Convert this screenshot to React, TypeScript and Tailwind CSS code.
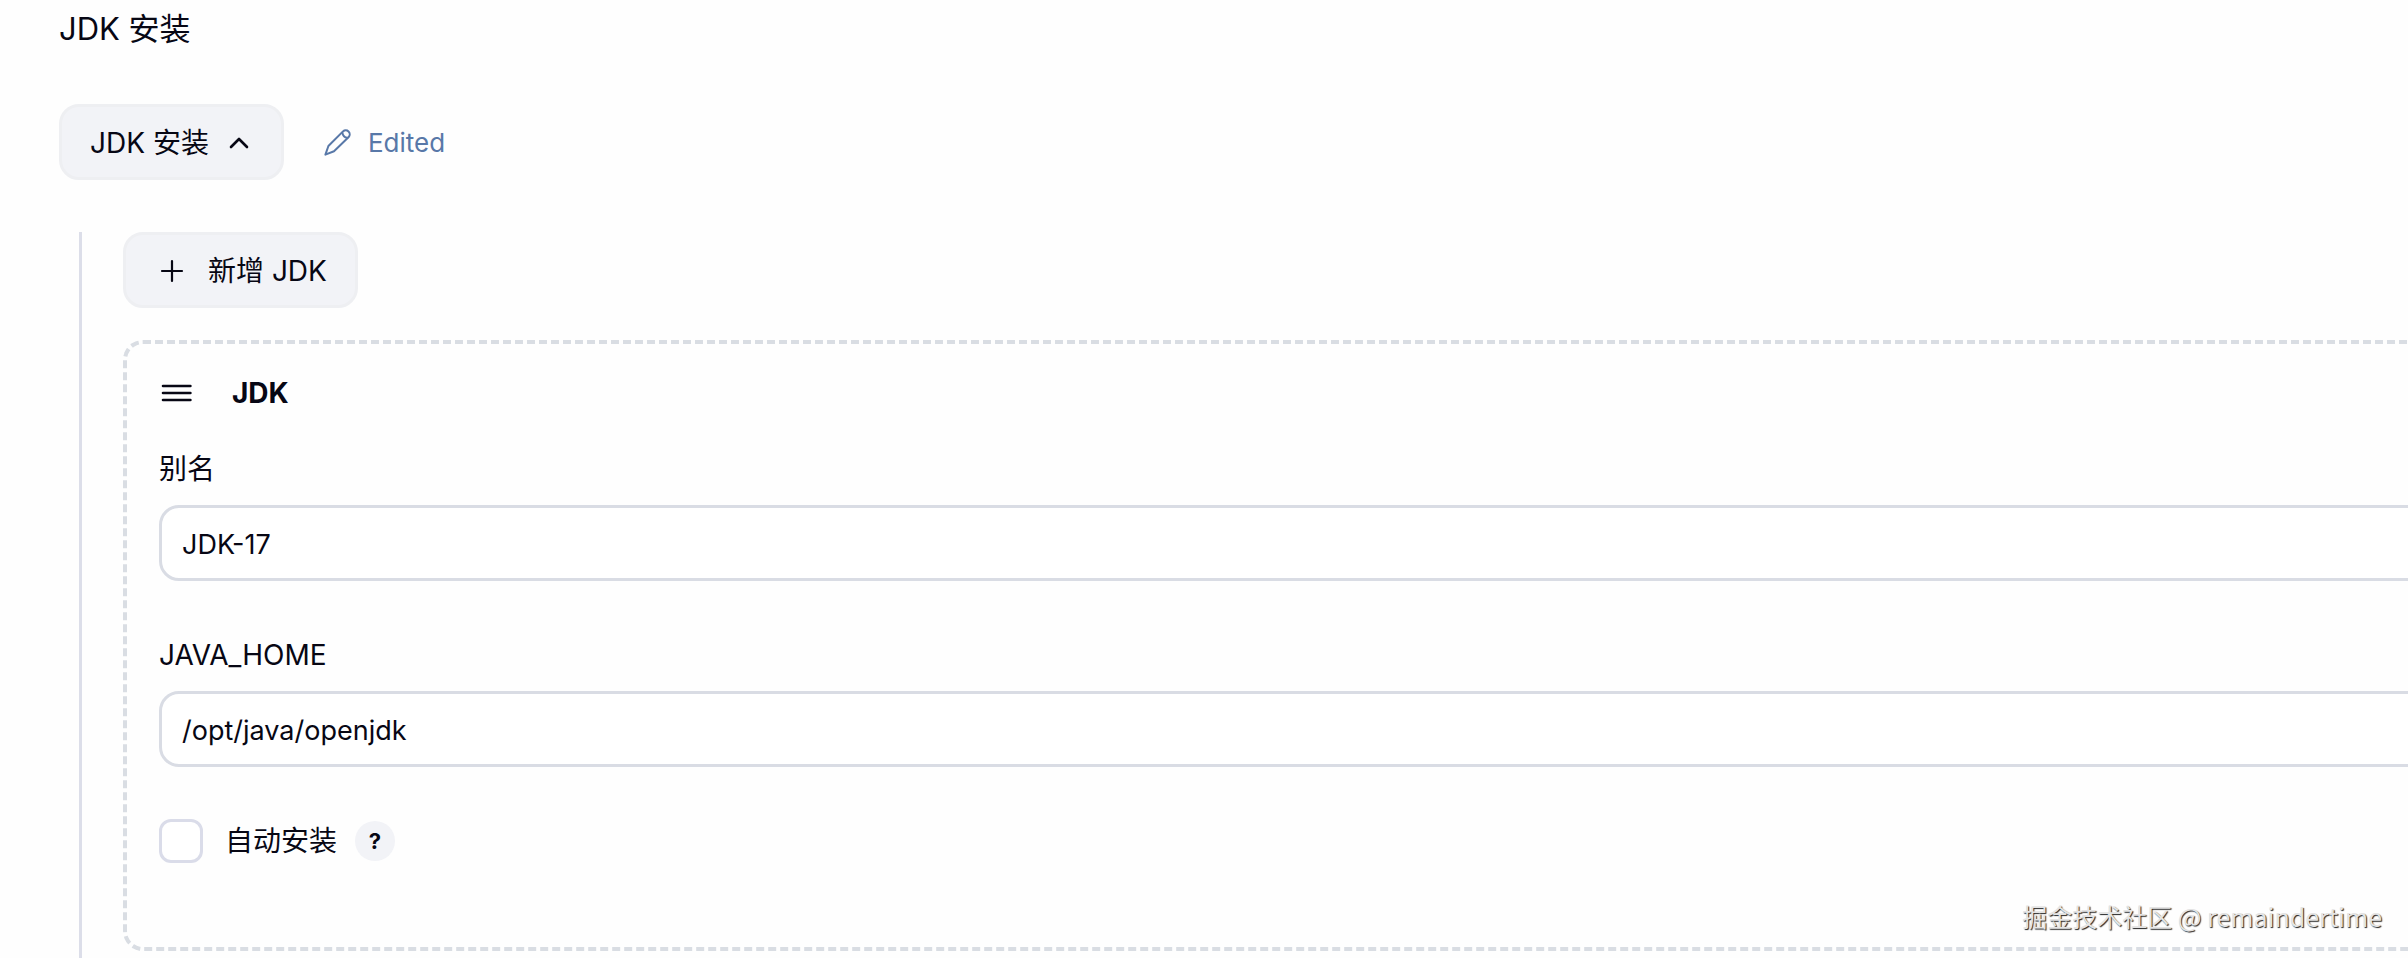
import { useState } from "react";

function ChevronUpIcon() {
  return (
    <svg className="w-5 h-3" viewBox="0 0 20 12" fill="none" stroke="currentColor" strokeWidth="2.6" strokeLinecap="round" strokeLinejoin="round" aria-hidden="true">
      <path d="M2 10l8-8 8 8" />
    </svg>
  );
}

function PencilIcon() {
  return (
    <svg className="w-7 h-7" viewBox="0 0 28 28" fill="none" stroke="currentColor" strokeWidth="2" strokeLinecap="round" strokeLinejoin="round" aria-hidden="true">
      <path d="M19 3.4a4 4 0 0 1 5.7 5.6L10 23.2 1.4 26.6 4.4 18z" />
      <path d="M18.4 4.8q.6 4.2 5 5" />
    </svg>
  );
}

function PlusIcon() {
  return (
    <svg className="w-6 h-6" viewBox="0 0 24 24" fill="none" stroke="currentColor" strokeWidth="2.2" strokeLinecap="round" aria-hidden="true">
      <path d="M12 2v20M2 12h20" />
    </svg>
  );
}

function HandleIcon() {
  return (
    <svg className="w-8 h-5" viewBox="0 0 32 20" fill="none" stroke="currentColor" strokeWidth="2.6" strokeLinecap="round" aria-hidden="true">
      <path d="M3 3h27.4M3 10h27.4M3 17h27.4" />
    </svg>
  );
}

type FieldProps = {
  id: string;
  label: string;
  defaultValue: string;
};

function Field({ id, label, defaultValue }: FieldProps) {
  return (
    <div className="flex flex-col gap-4">
      <label htmlFor={id} className="leading-10">
        {label}
      </label>
      <input
        id={id}
        type="text"
        defaultValue={defaultValue}
        className="w-full h-19 px-5 pt-0.5 rounded-[20px] border-3 border-[#d9dce4] bg-white text-[27px] outline-none"
      />
    </div>
  );
}

export default function App() {
  const [open, setOpen] = useState(true);

  return (
    <main className="relative flex flex-col min-h-screen overflow-hidden bg-[#fefefe] pl-[59px] text-[28px] text-[#070714] font-normal font-[Inter,'Noto_Sans_CJK_SC',sans-serif]">
      <h1 className="pt-[5px] text-[31px] leading-12">JDK 安装</h1>

      <div className="flex items-center gap-10 mt-[51px]">
        <button
          type="button"
          aria-expanded={open}
          onClick={() => setOpen(!open)}
          className="flex items-center gap-5 h-19 pl-7 pr-8 pt-0.5 rounded-[20px] border-3 border-[#eeeff2] bg-[#f2f3f7]"
        >
          JDK 安装
          <ChevronUpIcon />
        </button>
        <span className="flex items-center gap-4 text-[26px] text-[#5878a8]">
          <PencilIcon />
          Edited
        </span>
      </div>

      {open && (
        <section className="flex flex-col flex-1 items-start mt-13 ml-5 pl-[41px] border-l-3 border-[#dcdee9]">
          <button
            type="button"
            className="flex items-center gap-6 h-19 pl-[34px] pr-7 pt-0.5 rounded-[20px] border-3 border-[#eeeff2] bg-[#f2f3f7]"
          >
            <PlusIcon />
            新增 JDK
          </button>

          {/* runs past the right edge of the window */}
          <div className="self-stretch mt-8 -mr-20 px-8 pt-[29px] pb-[84px] rounded-[20px] border-4 border-dashed border-[#d9dde3]">
            <div className="flex items-center gap-10 h-10 pl-px">
              <HandleIcon />
              <h2 className="font-bold">JDK</h2>
            </div>

            <div className="flex flex-col gap-[54px] mt-9">
              <Field id="jdk-name" label="别名" defaultValue="JDK-17" />
              <Field id="jdk-home" label="JAVA_HOME" defaultValue="/opt/java/openjdk" />
            </div>

            <div className="flex items-center mt-13">
              <input
                id="jdk-auto"
                type="checkbox"
                className="appearance-none size-11 rounded-xl border-3 border-[#dadce9] bg-white checked:bg-[#5878a8]"
              />
              <label htmlFor="jdk-auto" className="px-5 pl-[22px] pr-[18px]">
                自动安装
              </label>
              <button
                type="button"
                className="flex items-center justify-center size-10 rounded-full bg-[#f2f3f7] text-[22px] font-bold"
              >
                ?
              </button>
            </div>
          </div>
        </section>
      )}

      <p className="absolute right-[26px] bottom-6 text-[25px] leading-9 text-[#e4e4e4] font-['Noto_Sans_CJK_SC',sans-serif] [text-shadow:1px_1px_1px_#222]">
        掘金技术社区 @ remaindertime
      </p>
    </main>
  );
}
